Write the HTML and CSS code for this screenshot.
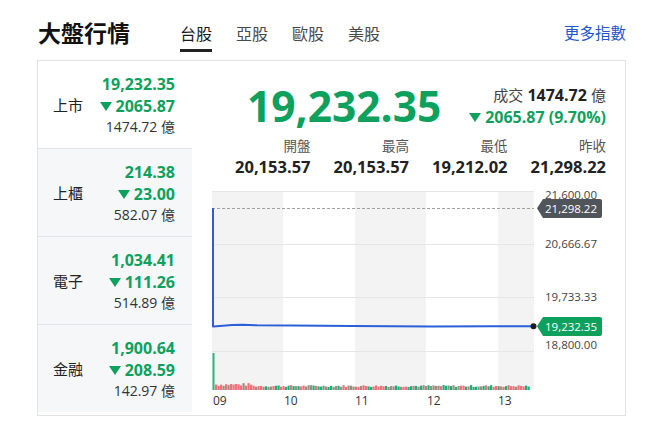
FILE: index.html
```html
<!DOCTYPE html>
<html lang="zh-Hant">
<head>
  <meta charset="UTF-8">
  <title>大盤行情</title>
  <link rel="stylesheet" href="styles.css">
</head>
<body>
  <div class="page">
    <header class="top-bar">
      <h1 class="title">大盤行情</h1>
      <nav class="tabs">
        <span class="tab active">台股</span>
        <span class="tab">亞股</span>
        <span class="tab">歐股</span>
        <span class="tab">美股</span>
      </nav>
      <a class="more-link" href="#">更多指數</a>
    </header>

    <div class="card">
      <div class="index-list">
        <div class="index-row current">
          <span class="index-name">上市</span>
          <div class="index-values">
            <div class="val">19,232.35</div>
            <div class="val"><i class="down"></i>2065.87</div>
            <div class="amount">1474.72 億</div>
          </div>
        </div>
        <div class="index-row">
          <span class="index-name">上櫃</span>
          <div class="index-values">
            <div class="val">214.38</div>
            <div class="val"><i class="down"></i>23.00</div>
            <div class="amount">582.07 億</div>
          </div>
        </div>
        <div class="index-row">
          <span class="index-name">電子</span>
          <div class="index-values">
            <div class="val">1,034.41</div>
            <div class="val"><i class="down"></i>111.26</div>
            <div class="amount">514.89 億</div>
          </div>
        </div>
        <div class="index-row">
          <span class="index-name">金融</span>
          <div class="index-values">
            <div class="val">1,900.64</div>
            <div class="val"><i class="down"></i>208.59</div>
            <div class="amount">142.97 億</div>
          </div>
        </div>
      </div>

      <div class="detail">
        <div class="summary">
          <div class="big-price">19,232.35</div>
          <div class="summary-side">
            <div class="volume"><span class="lbl">成交</span> <b>1474.72</b> <span class="lbl">億</span></div>
            <div class="change"><i class="down"></i>2065.87 (9.70%)</div>
          </div>
        </div>

        <div class="stats">
          <div class="stat"><div class="stat-label">開盤</div><div class="stat-value">20,153.57</div></div>
          <div class="stat"><div class="stat-label">最高</div><div class="stat-value">20,153.57</div></div>
          <div class="stat"><div class="stat-label">最低</div><div class="stat-value">19,212.02</div></div>
          <div class="stat"><div class="stat-label">昨收</div><div class="stat-value">21,298.22</div></div>
        </div>

        <svg class="chart" width="393" height="224" viewBox="0 0 393 224">
          <rect x="0" y="4" width="322" height="199" fill="#fff"/>
          <rect x="0" y="4" width="71" height="199" fill="#f3f3f3"/>
          <rect x="143" y="4" width="71" height="199" fill="#f3f3f3"/>
          <rect x="286" y="4" width="36" height="199" fill="#f3f3f3"/>
          <g stroke="#e6e6e6" stroke-width="1">
            <line x1="0" y1="4.5" x2="322" y2="4.5"/>
            <line x1="0" y1="57.5" x2="322" y2="57.5"/>
            <line x1="0" y1="110.5" x2="322" y2="110.5"/>
            <line x1="0" y1="164.5" x2="322" y2="164.5"/>
          </g>
          <line x1="0" y1="21.5" x2="322" y2="21.5" stroke="#a0a0a0" stroke-dasharray="3 2"/>
          <g id="volume"></g>
          <path d="M1,21 L1,139.5 L8,139 L20,138 L30,137.8 L45,138.3 L80,138.6 L140,138.9 L220,139.4 L280,139.2 L322,139.3"
                fill="none" stroke="#2b5fd9" stroke-width="2" stroke-linejoin="round"/>
          <circle cx="321.5" cy="139.3" r="3" fill="#1e1e1e"/>

          <g class="x-labels">
            <text x="1" y="218">09</text>
            <text x="72" y="218">10</text>
            <text x="143" y="218">11</text>
            <text x="215" y="218">12</text>
            <text x="286" y="218">13</text>
          </g>
          <g class="y-labels">
            <text x="333" y="12">21,600.00</text>
            <text x="333" y="61">20,666.67</text>
            <text x="333" y="114">19,733.33</text>
            <text x="333" y="162">18,800.00</text>
          </g>

          <path d="M325,21.3 L331,12 L388,12 Q390,12 390,14 L390,29 Q390,31 388,31 L331,31 Z" fill="#4f555b"/>
          <text class="tag-text" x="333" y="25.5">21,298.22</text>
          <path d="M325,139.3 L331,130 L388,130 Q390,130 390,132 L390,147 Q390,149 388,149 L331,149 Z" fill="#0ea15d"/>
          <text class="tag-text" x="333" y="143.5">19,232.35</text>
        </svg>
      </div>
    </div>
  </div>

  <script>
    // volume bars under the price line
    const vol = document.getElementById("volume");
    const colors = ["#f2707a", "#17b27a", "#9a8f80"];
    let seed = 7;
    function rnd() {
      seed = (seed * 9301 + 49297) % 233280;
      return seed / 233280;
    }
    let bars = '<rect x="0.5" y="166" width="2" height="37" fill="#2cb67f"/>';
    for (let x = 3; x < 318; x += 2.5) {
      const h = x < 40 ? 4 + rnd() * 3 : 3 + rnd() * 2;
      const c = x < 40 ? (rnd() < 0.6 ? colors[0] : colors[2]) : colors[Math.floor(rnd() * 3)];
      bars += `<rect x="${x}" y="${203 - h}" width="2.2" height="${h}" fill="${c}"/>`;
    }
    vol.innerHTML = bars;
  </script>
</body>
</html>
```

FILE: styles.css
```css
body {
  margin: 0;
  background: #fff;
  font-family: "Open Sans", "Noto Sans CJK TC", sans-serif;
  color: #222;
}
.page {
  padding-left: 37px;
  width: 589px;
}
.top-bar {
  display: flex;
  align-items: flex-start;
  padding-top: 16px;
  height: 36px;
  margin-bottom: 8px;
}
.title {
  margin: 0;
  font-family: "Noto Sans CJK TC", sans-serif;
  font-size: 23px;
  font-weight: 700;
  line-height: 32px;
  color: #111;
  padding-left: 1px;
}
.tabs {
  display: flex;
  gap: 24px;
  margin-left: 50px;
}
.tab {
  font-family: "Noto Sans CJK TC", sans-serif;
  font-size: 16px;
  line-height: 22px;
  padding: 6px 0 5px;
  color: #4a4a4a;
  border-bottom: 3px solid transparent;
}
.tab.active {
  color: #1a1a1a;
  border-bottom-color: #222;
}
.more-link {
  margin-left: auto;
  font-family: "Noto Sans CJK TC", sans-serif;
  font-size: 15.5px;
  line-height: 32px;
  color: #2357c9;
  text-decoration: none;
}

.card {
  border: 1px solid #e2e2e2;
  display: grid;
  grid-template-columns: 154px 1fr;
  padding-bottom: 3px;
}
.index-row {
  box-sizing: border-box;
  height: 88px;
  display: flex;
  align-items: center;
  justify-content: space-between;
  padding: 0 17px 0 15px;
  background: #f5f7f9;
  border-top: 1px solid #e3e5e8;
}
.index-row.current {
  height: 87px;
  background: #fff;
  border-top: none;
}
.index-name {
  font-family: "Noto Sans CJK TC", sans-serif;
  font-size: 15px;
  color: #222;
}
.index-values {
  text-align: right;
  padding-top: 1px;
}
.val {
  font-size: 16px;
  font-weight: 700;
  line-height: 22px;
  color: #0ea15d;
}
.amount {
  font-size: 14px;
  line-height: 20px;
  color: #333;
}
.down {
  display: inline-block;
  width: 0;
  height: 0;
  border-left: 6px solid transparent;
  border-right: 6px solid transparent;
  border-top: 9px solid #0ea15d;
  margin-right: 4px;
  vertical-align: 1px;
}

.detail {
  padding: 15px 19px 0 20px;
}
.summary {
  display: flex;
  align-items: center;
  height: 59px;
}
.big-price {
  margin-left: 35px;
  font-size: 42.5px;
  font-weight: 700;
  line-height: 58px;
  color: #0ea15d;
}
.summary-side {
  margin-left: auto;
  text-align: right;
}
.volume {
  font-size: 16px;
  line-height: 22px;
}
.volume .lbl {
  font-family: "Noto Sans CJK TC", sans-serif;
  font-size: 15px;
  color: #444;
}
.change {
  font-size: 16px;
  font-weight: 700;
  line-height: 22px;
  color: #0ea15d;
}
.stats {
  display: grid;
  grid-template-columns: repeat(4, 1fr);
  text-align: right;
}
.stat-label {
  font-family: "Noto Sans CJK TC", sans-serif;
  font-size: 13.5px;
  line-height: 20px;
  color: #555;
}
.stat-value {
  font-size: 16.5px;
  font-weight: 700;
  line-height: 24px;
  color: #222;
}
.chart {
  display: block;
  margin-top: 8px;
  font-family: "Open Sans", sans-serif;
}
.x-labels text {
  font-size: 12px;
  fill: #333;
}
.y-labels text {
  font-size: 11.5px;
  fill: #444;
}
.tag-text {
  font-size: 11.5px;
  fill: #fff;
}
```
